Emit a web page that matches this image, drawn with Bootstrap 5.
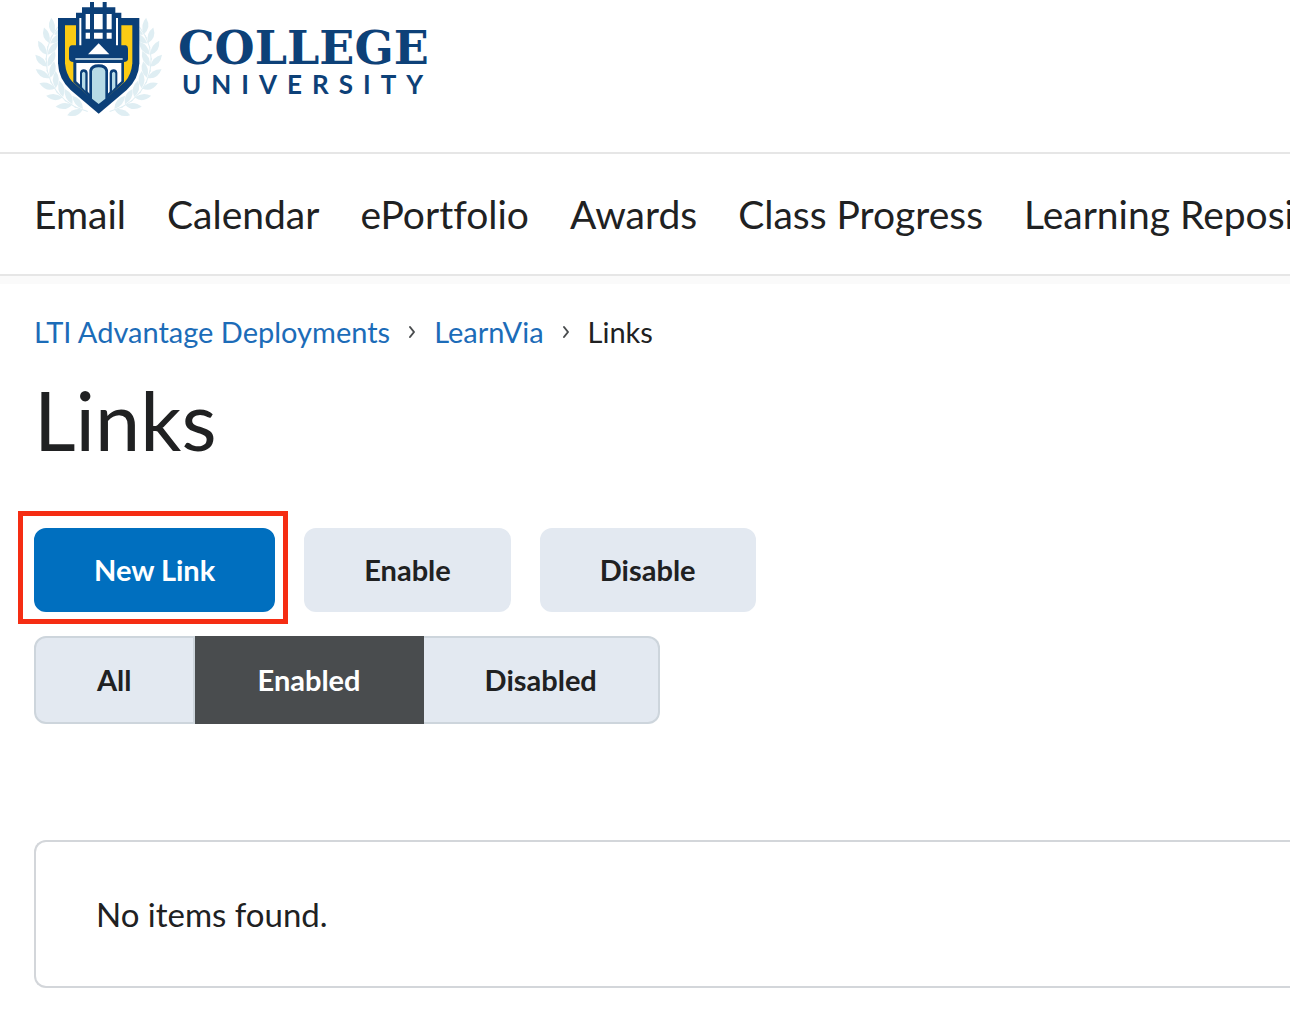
<!DOCTYPE html>
<html lang="en">
<head>
<meta charset="utf-8">
<meta name="viewport" content="width=device-width, initial-scale=1">
<title>Links - LearnVia</title>
<link rel="stylesheet" href="https://cdn.jsdelivr.net/npm/bootstrap@5.3.0/dist/css/bootstrap.min.css">
<style>
  body { font-family: Lato, "Open Sans", sans-serif; color: #202122; background: #fff; font-variant-ligatures: none; }
  .gutter { padding-left: 34px; }
  .site-header { height: 154px; border-bottom: 2px solid #e6e6e6; }
  .brand-link { color: #0d4178; gap: 14px; }
  .brand-crest { width: 130px; height: 120px; }
  .brand-text { padding-top: 26px; }
  .brand-top { font-family: "DejaVu Serif", serif; font-weight: 700; font-size: 46px; line-height: 44px; }
  .brand-sub { font-weight: 700; font-size: 26px; line-height: 28px; letter-spacing: 10px; padding-left: 4px; }
  .site-nav { height: 122px; gap: 41px; border-bottom: 2px solid #e6e6e6; }
  .site-nav a { color: #202122; font-size: 39px; line-height: 48px; }
  .nav-shade { height: 8px; background: #fafafa; }
  .crumbs { padding-top: 28px; font-size: 29px; line-height: 40px; gap: 18px; }
  .crumbs a { color: #1c6cb8; }
  .crumbs svg { width: 8px; height: 14px; }
  .crumbs li + li { gap: 18px; }
  .page-title { font-size: 81px; line-height: 96px; font-weight: 400; margin: 20px 0 60px; }
  .toolbar { gap: 29px; }
  .btn-tool { --bs-btn-font-size: 29px; --bs-btn-font-weight: 700; --bs-btn-line-height: 40px;
    --bs-btn-padding-x: 58px; --bs-btn-padding-y: 20px; --bs-btn-border-width: 2px; --bs-btn-border-radius: 12px;
    --bs-btn-color: #202122; --bs-btn-bg: #e3e9f1; --bs-btn-border-color: #e3e9f1;
    --bs-btn-hover-color: #202122; --bs-btn-hover-bg: #d3d9e3; --bs-btn-hover-border-color: #d3d9e3; }
  .btn-main { --bs-btn-color: #fff; --bs-btn-bg: #006fbf; --bs-btn-border-color: #006fbf;
    --bs-btn-hover-color: #fff; --bs-btn-hover-bg: #004489; --bs-btn-hover-border-color: #004489; }
  .callout-box { inset: -17px -13px -12px -16px; border: 5px solid #f52d13; pointer-events: none; }
  .filters { margin-top: 24px; }
  .filters .btn-tool { --bs-btn-padding-x: 61px; --bs-btn-padding-y: 22px; --bs-btn-border-color: #cdd5dc;
    --bs-btn-active-color: #fff; --bs-btn-active-bg: #494c4e; --bs-btn-active-border-color: #494c4e; }
  .filters .btn-group > .btn-tool:not(:first-child) { margin-left: 0; }
  .filters .btn-tool:last-child { border-left: 0; }
  .empty-box { margin-top: 116px; padding: 52px 60px; border: 2px solid #d3d6da; border-right: 0;
    border-radius: 12px 0 0 12px; font-size: 33px; line-height: 40px; }
</style>
</head>
<body class="overflow-x-hidden">

<header class="site-header gutter">
  <a class="brand-link d-inline-flex text-decoration-none" href="#">
    <svg class="brand-crest" viewBox="42 0 390 360" role="img" aria-label="Crest">
      <defs>
        <g id="sprig" fill="#dfeef3">
          <path d="M80 186Q50 182 48 148Q76 156 80 186Z"/>
          <path d="M82 186Q80 156 108 142Q112 174 82 186Z"/>
          <path d="M78 160L81 160L81 202L78 202Z"/>
        </g>
        <g id="branch">
          <use href="#sprig" transform="rotate(-70 236 180)"/>
          <use href="#sprig" transform="rotate(-57 236 180)"/>
          <use href="#sprig" transform="rotate(-44 236 180)"/>
          <use href="#sprig" transform="rotate(-31 236 180)"/>
          <use href="#sprig" transform="rotate(-18 236 180)"/>
          <use href="#sprig" transform="rotate(-5 236 180)"/>
          <use href="#sprig" transform="rotate(8 236 180)"/>
          <use href="#sprig" transform="rotate(21 236 180)"/>
          <use href="#sprig" transform="rotate(32 236 180)"/>
        </g>
      </defs>
      <use href="#branch"/>
      <use href="#branch" transform="translate(472 0) scale(-1 1)"/>
      <!-- shield -->
      <path d="M114 54H358V190Q356 238 320 270L236 341L152 270Q116 238 114 190Z" fill="#0b3f78"/>
      <path d="M135 76H337V190Q334 224 316 244L236 314L156 244Q138 224 135 190Z" fill="#fbcb14"/>
      <!-- tower -->
      <path d="M168 38H186V22H210V6H222V22H248V6H260V22H286V38H304V136H318Q324 138 324 146V178Q322 186 312 186V246L236 318L160 246V186Q148 184 147 176V146Q148 137 156 136H168Z" fill="#0b3f78"/>
      <path d="M178 54H184V136H178ZM288 54H294V136H288ZM197 42H210V88H197ZM222 42H248V88H222ZM260 42H275V88H260ZM197 98H210V116H197ZM222 98H248V116H222ZM260 98H275V116H260Z" fill="#fff"/>
      <path d="M236 130L268 163H204Z" fill="#fff"/>
      <path d="M166 174H308V180H166Z" fill="#a9c3d6"/>
      <path d="M169 189H304V244L236 306L169 244Z" fill="#fff"/>
      <path d="M180 258V218Q182 208 191 208Q201 208 203 218V280ZM292 258V218Q290 208 281 208Q271 208 269 218V280ZM208 284V210Q212 193 236 193Q260 193 264 210V284L236 310Z" fill="#0b3f78"/>
      <path d="M186 262V220Q191 210 196 220V272ZM286 262V220Q281 210 276 220V272ZM216 296V214Q218 202 236 202Q254 202 256 214V296L236 312Z" fill="#b7dbe6"/>
    </svg>
    <span class="brand-text d-flex flex-column">
      <span class="brand-top">COLLEGE</span>
      <span class="brand-sub">UNIVERSITY</span>
    </span>
  </a>
</header>

<nav class="site-nav gutter d-flex align-items-center text-nowrap overflow-hidden" aria-label="Main">
  <a class="text-decoration-none" href="#">Email</a>
  <a class="text-decoration-none" href="#">Calendar</a>
  <a class="text-decoration-none" href="#">ePortfolio</a>
  <a class="text-decoration-none" href="#">Awards</a>
  <a class="text-decoration-none" href="#">Class Progress</a>
  <a class="text-decoration-none" href="#">Learning Repository</a>
</nav>
<div class="nav-shade"></div>

<main class="gutter">
  <nav aria-label="Breadcrumb">
    <ol class="crumbs list-unstyled d-flex flex-wrap mb-0">
      <li><a class="text-decoration-none" href="#">LTI Advantage Deployments</a></li>
      <li class="d-flex align-items-center">
        <svg viewBox="0 0 8 14" aria-hidden="true"><path d="M2 2L6 7L2 12" fill="none" stroke="#494c4e" stroke-width="2" stroke-linecap="round" stroke-linejoin="round"/></svg>
        <a class="text-decoration-none" href="#">LearnVia</a>
      </li>
      <li class="d-flex align-items-center" aria-current="page">
        <svg viewBox="0 0 8 14" aria-hidden="true"><path d="M2 2L6 7L2 12" fill="none" stroke="#494c4e" stroke-width="2" stroke-linecap="round" stroke-linejoin="round"/></svg>
        <span>Links</span>
      </li>
    </ol>
  </nav>

  <h1 class="page-title">Links</h1>

  <div class="toolbar d-flex flex-wrap">
    <div class="position-relative">
      <button type="button" class="btn btn-tool btn-main">New Link</button>
      <div class="callout-box position-absolute"></div>
    </div>
    <button type="button" class="btn btn-tool">Enable</button>
    <button type="button" class="btn btn-tool">Disable</button>
  </div>

  <div class="filters">
    <div class="btn-group" role="group" aria-label="Filter links">
      <button type="button" class="btn btn-tool">All</button>
      <button type="button" class="btn btn-tool active" aria-pressed="true">Enabled</button>
      <button type="button" class="btn btn-tool">Disabled</button>
    </div>
  </div>

  <div class="empty-box">No items found.</div>
</main>

<script src="https://cdn.jsdelivr.net/npm/bootstrap@5.3.0/dist/js/bootstrap.bundle.min.js"></script>
</body>
</html>
